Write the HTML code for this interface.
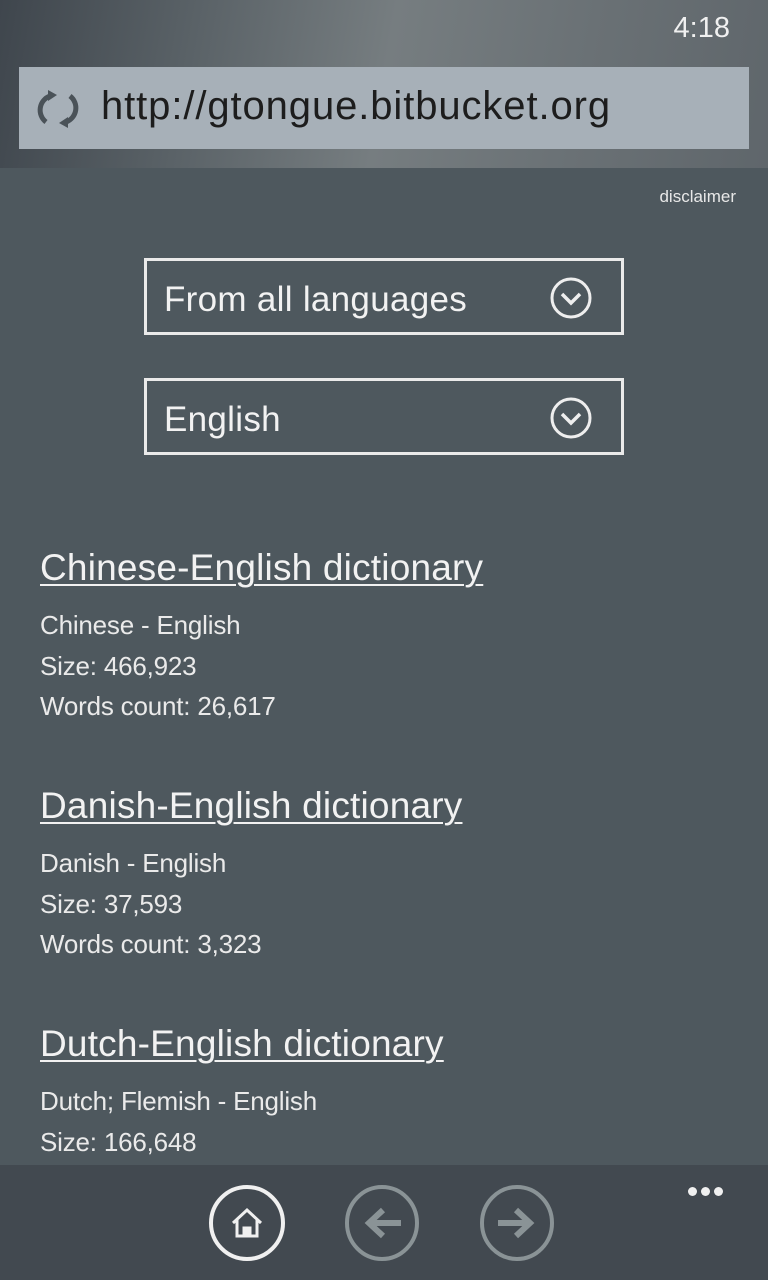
<!DOCTYPE html>
<html><head><meta charset="utf-8"><style>
*{margin:0;padding:0;box-sizing:border-box}
body{width:768px;height:1280px;overflow:hidden;background:#4e585e;font-family:"Liberation Sans",sans-serif;color:#f2f2f2;position:relative}
.top{position:absolute;left:0;top:0;width:768px;height:168px;background:linear-gradient(100deg,#3f464d 0%,#5a6267 25%,#767d80 50%,#6a7175 75%,#5f666b 100%)}
.time{position:absolute;right:38px;top:12px;font-size:29px;color:#f0f0f0}
.url{position:absolute;left:19px;top:67px;width:730px;height:82px;background:#a7b0b8}
.url span{position:absolute;left:82px;top:17px;font-size:40px;color:#1d1d1d;letter-spacing:0.9px}
.disc{position:absolute;right:32px;top:187px;font-size:17px;color:#e8e8e8}
.sel{position:absolute;left:144px;width:480px;height:77px;border:3px solid #eaeaea}
.sel span{position:absolute;left:17px;top:19px;font-size:35px;letter-spacing:0.3px}
.sel svg{position:absolute;right:28px;top:15px}
.entry{position:absolute;left:40px}
.entry a{display:block;font-size:37px;color:#f2f2f2;text-decoration:underline;text-decoration-thickness:2px;text-underline-offset:4px;margin-bottom:16px;letter-spacing:0.2px}
.entry p{font-size:26px;line-height:40.5px;color:#eaeaea;letter-spacing:-0.2px}
.bar{position:absolute;left:0;top:1165px;width:768px;height:115px;background:#424950}
.dots{position:absolute;left:688px;top:1183px}
.dots i{display:inline-block;width:9px;height:9px;border-radius:50%;background:#f0f0f0;margin-right:4px}
</style></head><body>
<div class="top">
<div class="time">4:18</div>
<div class="url">
<svg style="position:absolute;left:17px;top:19px" width="44" height="46" viewBox="0 0 44 46"><path d="M10 36 A15 15 0 0 1 14 10" fill="none" stroke="#4a5258" stroke-width="5"/><path d="M34 10 A15 15 0 0 1 30 36" fill="none" stroke="#4a5258" stroke-width="5"/><path d="M12 4 L21 9 L12 15Z" fill="#4a5258"/><path d="M32 31 L23 37 L32 42Z" fill="#4a5258"/></svg>
<span>http://gtongue.bitbucket.org</span></div>
</div>
<div class="disc">disclaimer</div>
<div class="sel" style="top:258px"><span>From all languages</span><svg width="44" height="44" viewBox="0 0 44 44"><circle cx="22" cy="22" r="19" fill="none" stroke="#eee" stroke-width="3"/><path d="M13 18 L22 27 L31 18" fill="none" stroke="#eee" stroke-width="3.5"/></svg></div>
<div class="sel" style="top:378px"><span>English</span><svg width="44" height="44" viewBox="0 0 44 44"><circle cx="22" cy="22" r="19" fill="none" stroke="#eee" stroke-width="3"/><path d="M13 18 L22 27 L31 18" fill="none" stroke="#eee" stroke-width="3.5"/></svg></div>
<div class="entry" style="top:547px"><a>Chinese-English dictionary</a><p>Chinese - English<br>Size: 466,923<br>Words count: 26,617</p></div>
<div class="entry" style="top:785px"><a>Danish-English dictionary</a><p>Danish - English<br>Size: 37,593<br>Words count: 3,323</p></div>
<div class="entry" style="top:1023px"><a>Dutch-English dictionary</a><p>Dutch; Flemish - English<br>Size: 166,648</p></div>
<div class="bar"></div>
<div class="dots"><i></i><i></i><i></i></div>
<svg style="position:absolute;left:208px;top:1184px" width="80" height="78" viewBox="0 0 80 78"><ellipse cx="39" cy="39" rx="36" ry="36" fill="none" stroke="#f0f0f0" stroke-width="4"/><path d="M25 39 L39 26 L53 39 M29 36 V52 H49 V36 M36 52 V44 H42 V52" fill="none" stroke="#f0f0f0" stroke-width="3"/><rect x="36" y="44" width="6" height="8" fill="#f0f0f0"/></svg>
<svg style="position:absolute;left:343px;top:1184px" width="80" height="78" viewBox="0 0 80 78"><ellipse cx="39" cy="39" rx="35" ry="36" fill="none" stroke="#8a9396" stroke-width="4"/><path d="M58 39 H28 M40 26 L26 39 L40 52" fill="none" stroke="#8a9396" stroke-width="6"/></svg>
<svg style="position:absolute;left:478px;top:1184px" width="80" height="78" viewBox="0 0 80 78"><ellipse cx="39" cy="39" rx="35" ry="36" fill="none" stroke="#8a9396" stroke-width="4"/><path d="M20 39 H50 M38 26 L52 39 L38 52" fill="none" stroke="#8a9396" stroke-width="6"/></svg>
</body></html>
